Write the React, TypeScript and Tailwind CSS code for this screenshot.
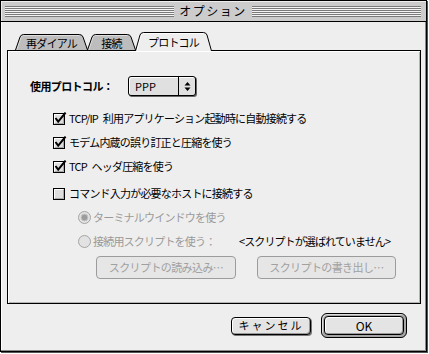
import React from "react";

const FONT = "font-['Noto_Sans_CJK_JP','Noto_Sans',sans-serif]";

function Tab({ label, w, h, active, cls }: { label: string; w: number; h: number; active?: boolean; cls: string }) {
  const d = `M0.5 ${h} L5 3 Q6 0.5 8.5 0.5 H${w - 8.5} Q${w - 6} 0.5 ${w - 5} 3 L${w - 0.5} ${h}`;
  return (
    <div className={`relative flex items-center justify-center shrink-0 -mr-[1px] ${cls}`}>
      <svg className="absolute inset-0" width={w} height={h} viewBox={`0 0 ${w} ${h}`}>
        <path d={d + " Z"} fill={active ? "#eeeeee" : "#bdbdbd"} />
        <path d={`M1.6 ${h} L6 3.4 Q6.8 1.5 8.5 1.5 H${w - 9}`} fill="none" stroke={active ? "#ffffff" : "#dedede"} />
        <path d={d} fill="none" stroke="#000" />
      </svg>
      <span className="relative pt-[2px] text-[11px] tracking-[-0.8px] text-black">{label}</span>
    </div>
  );
}

function CheckBox({ checked }: { checked?: boolean }) {
  return (
    <svg width="14" height="13" viewBox="0 0 14 13" className="shrink-0">
      <rect x="0.5" y="1.5" width="11" height="11" fill="#dddddd" stroke="#000" />
      <path d="M1.5 11 V2.5 H11" fill="none" stroke="#ffffff" />
      <path d="M2 11.5 H10.5 V2.5" fill="none" stroke="#a8a8a8" />
      {checked && <path d="M2.5 6 L5.2 9.6 L12.6 0.6" fill="none" stroke="#000" strokeWidth="2" />}
    </svg>
  );
}

function Radio({ selected }: { selected?: boolean }) {
  return (
    <svg width="13" height="13" viewBox="0 0 13 13" className="shrink-0">
      <circle cx="6.5" cy="6.5" r="6" fill="#e2e2e2" stroke="#a3a3a3" />
      {selected && <circle cx="6.5" cy="6.5" r="3.4" fill="#9c9c9c" stroke="#c4c4c4" />}
    </svg>
  );
}

function CheckRow({ checked, label, extra }: { checked?: boolean; label: string; extra?: string }) {
  return (
    <div className={`h-[24px] flex items-center pl-[45px] gap-[2px] ${extra ?? ""}`}>
      <CheckBox checked={checked} />
      <span className="whitespace-pre text-[11px] tracking-[-0.8px] text-black">{label}</span>
    </div>
  );
}

export default function App() {
  const stripes =
    "h-[11px] flex-1 bg-[repeating-linear-gradient(to_bottom,#7a7a7a_0px,#7a7a7a_1px,#f4f4f4_1px,#f4f4f4_2px)]";
  return (
    <div className={`w-[429px] h-[354px] bg-white ${FONT}`}>
      <div className="w-[427px] h-[352px] border border-black bg-[#eeeeee] flex flex-col shadow-[1px_1px_0_#555,inset_-1px_-1px_0_#8a8a8a,inset_1px_0_0_#ffffff]">
        {/* title bar */}
        <div className="h-[21px] shrink-0 border-b border-black bg-[#cccccc] flex items-center pl-[4px] pr-[5px] shadow-[inset_1px_1px_0_#eeeeee]">
          <div className={stripes} />
          <span className="px-[5px] text-[12px] tracking-[1.5px] leading-[14px] text-black">オプション</span>
          <div className={stripes} />
        </div>

        {/* body */}
        <div className="flex-1 flex flex-col pt-[10px] pl-[6px]">
          <div className="h-[18px] flex items-end pl-[8px]">
            <Tab label="再ダイアル" w={73} h={16} cls="w-[73px] h-[16px]" />
            <Tab label="接続" w={49} h={16} cls="w-[49px] h-[16px]" />
            <Tab label="プロトコル" w={77} h={19} active cls="w-[77px] h-[19px] -mb-[1px] z-10" />
          </div>

          <div className="w-[414px] h-[254px] shrink-0 border border-black bg-[#eeeeee] shadow-[inset_1px_1px_0_#ffffff,inset_-1px_-1px_0_#b4b4b4] flex flex-col pt-[25px]">
            <div className="h-[20px] flex items-center pl-[22px]">
              <span className="w-[98px] text-[11px] font-bold tracking-[-0.6px] text-black">使用プロトコル：</span>
              <div className="w-[68px] h-[20px] rounded-[3px] border border-black bg-[#e0e0e0] flex shadow-[inset_1px_1px_0_#ffffff,1px_1px_0_#666]">
                <span className="flex-1 pl-[6px] text-[11px] leading-[18px] text-black">PPP</span>
                <div className="w-[17px] border-l border-black flex items-center justify-center">
                  <svg width="7" height="11" viewBox="0 0 7 11">
                    <path d="M3.5 1 L6.5 4.5 H0.5 Z M3.5 10 L6.5 6.5 H0.5 Z" fill="#000" />
                  </svg>
                </div>
              </div>
            </div>

            <CheckRow checked label={"TCP/IP\u2002利用アプリケーション起動時に自動接続する"} extra="mt-[10px]" />
            <CheckRow checked label="モデム内蔵の誤り訂正と圧縮を使う" />
            <CheckRow checked label={"TCP\u2002ヘッダ圧縮を使う"} />
            <CheckRow label="コマンド入力が必要なホストに接続する" extra="mt-[3px]" />

            <div className="h-[24px] flex items-center pl-[70px] gap-[2px]">
              <Radio selected />
              <span className="text-[11px] tracking-[-0.8px] text-[#9a9a9a]">ターミナルウインドウを使う</span>
            </div>
            <div className="h-[24px] flex items-center pl-[70px] gap-[2px]">
              <Radio />
              <span className="w-[144px] text-[11px] tracking-[-0.8px] text-[#9a9a9a]">接続用スクリプトを使う：</span>
              <span className="text-[11px] tracking-[-0.9px] text-black">&lt;スクリプトが選ばれていません&gt;</span>
            </div>

            <div className="mt-[3px] h-[23px] flex pl-[88px] gap-[21px]">
              <div className="w-[140px] h-[23px] rounded-[4px] border border-[#9c9c9c] bg-[#e6e6e6] flex items-center justify-center text-[11px] tracking-[-0.6px] text-[#a0a0a0]">
                スクリプトの読み込み…
              </div>
              <div className="w-[139px] h-[23px] rounded-[4px] border border-[#9c9c9c] bg-[#e6e6e6] flex items-center justify-center text-[11px] tracking-[-0.6px] text-[#a0a0a0]">
                スクリプトの書き出し…
              </div>
            </div>
          </div>

          {/* bottom buttons */}
          <div className="mt-[9px] h-[25px] flex items-center justify-end gap-[10px] pr-[19px]">
            <div className="w-[80px] h-[18px] rounded-[4px] border border-black bg-[#e4e4e4] shadow-[inset_1px_1px_0_#ffffff,inset_-1px_-1px_0_#999,1px_1px_0_#777] flex items-center justify-center text-[11px] tracking-[2px] text-black">
              キャンセル
            </div>
            <div className="w-[86px] h-[25px] rounded-[6px] border border-black bg-[#a6a6a6] p-[2px] shadow-[inset_1px_1px_0_#dddddd]">
              <div className="w-full h-full rounded-[4px] border border-black bg-[#e4e4e4] shadow-[inset_1px_1px_0_#ffffff,inset_-1px_-1px_0_#999] flex items-center justify-center text-[12px] text-black">
                OK
              </div>
            </div>
          </div>
        </div>
      </div>
    </div>
  );
}
